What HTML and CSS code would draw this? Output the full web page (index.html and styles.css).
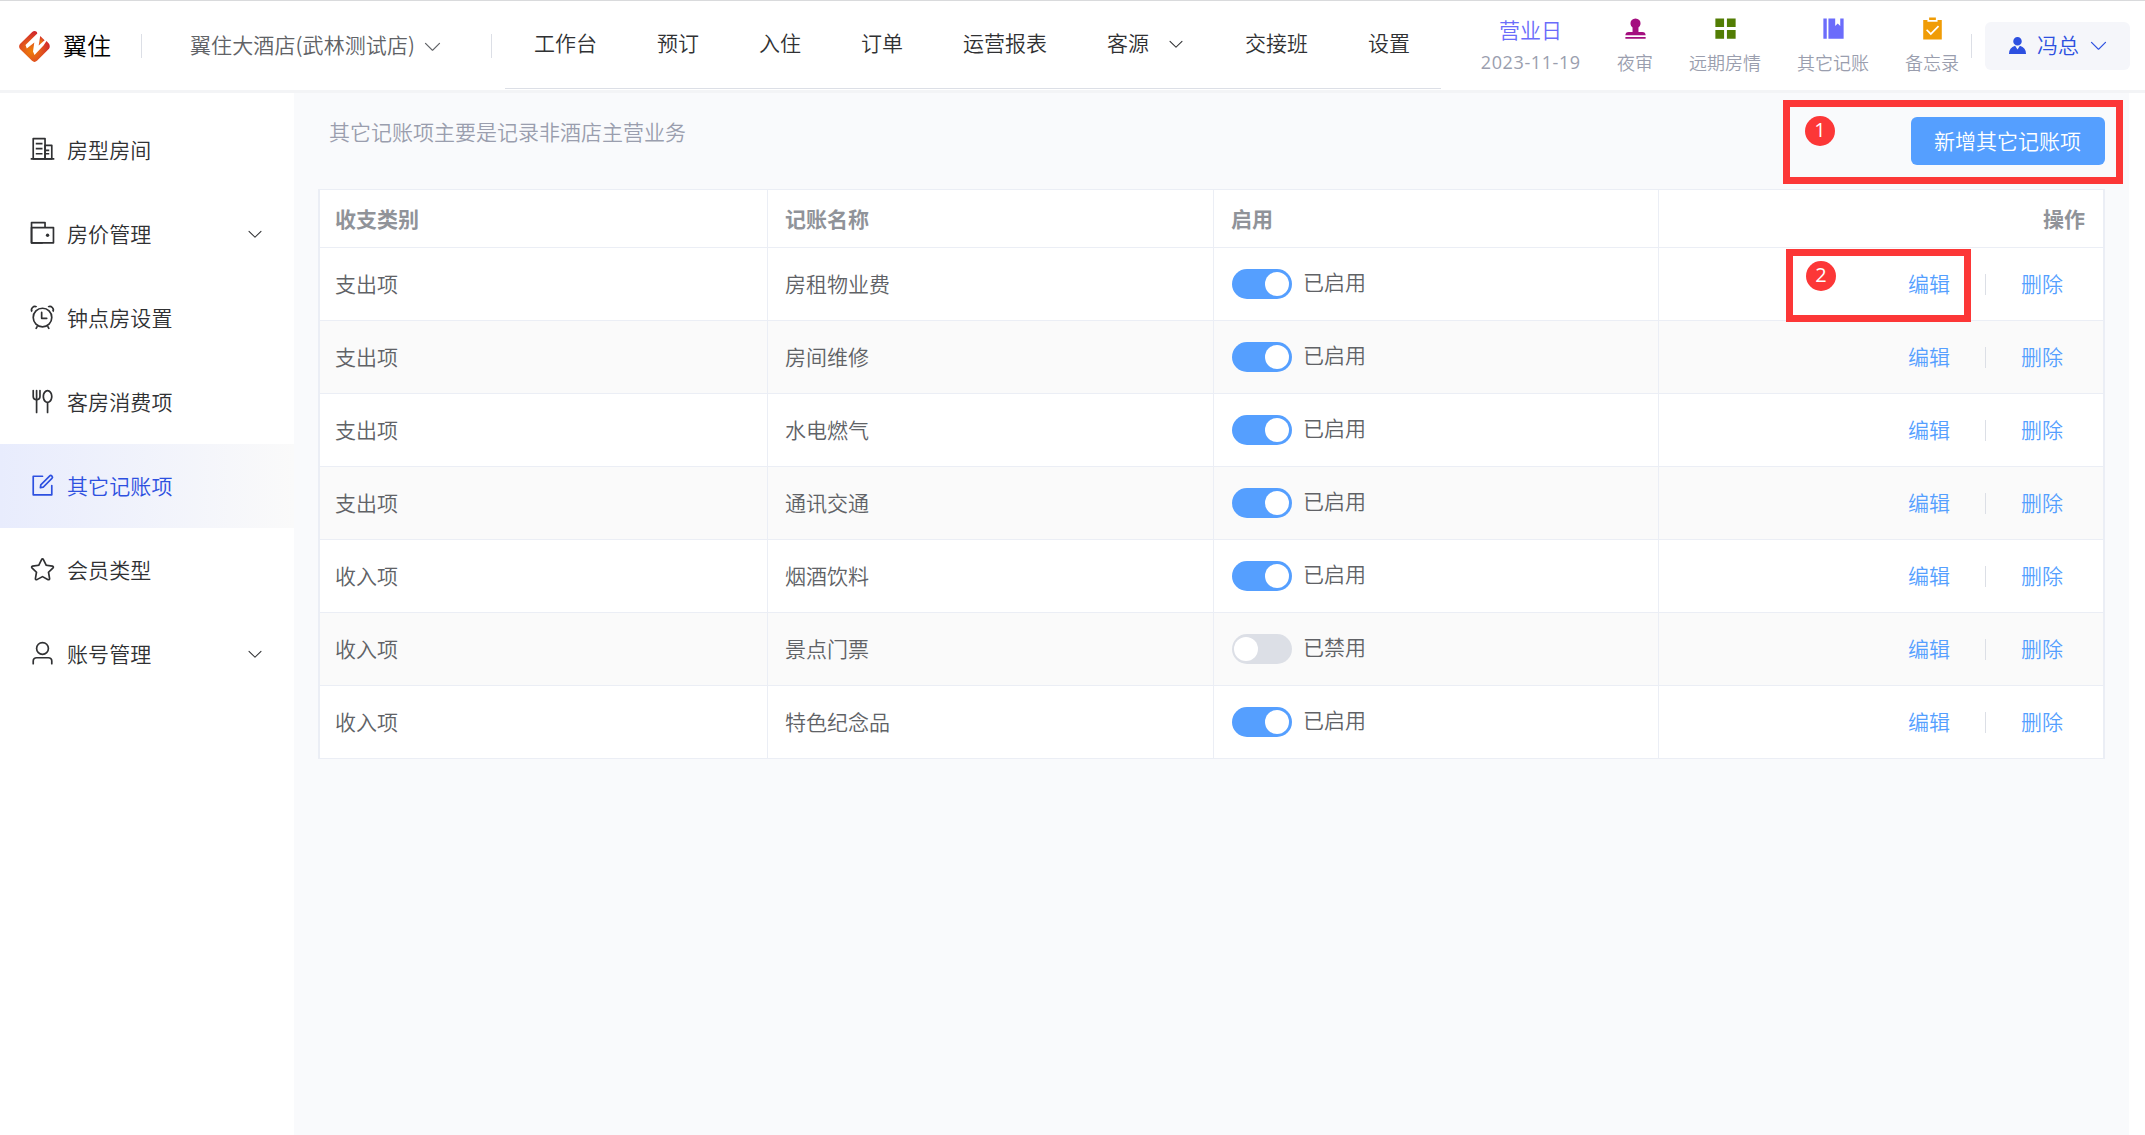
FILE: index.html
```html
<!DOCTYPE html>
<html lang="zh-CN">
<head>
<meta charset="utf-8">
<title>翼住 - 其它记账项</title>
<link rel="stylesheet" href="styles.css">
</head>
<body>
<svg class="sprite" aria-hidden="true">
  <symbol id="arrow" viewBox="0 0 1024 1024"><path d="M831.872 340.864 512 652.672 192.128 340.864a30.592 30.592 0 0 0-42.752 0 29.12 29.12 0 0 0 0 41.6L489.664 714.24a32 32 0 0 0 44.672 0l340.288-331.712a29.12 29.12 0 0 0 0-41.728 30.592 30.592 0 0 0-42.752 0z"/></symbol>
</svg>
<header class="header">
  <div class="brand">
    <svg class="logo" viewBox="0 0 31 31">
      <defs><radialGradient id="flame" cx="0.4" cy="0.65" r="0.62"><stop offset="0" stop-color="#ee7f08"/><stop offset="0.5" stop-color="#e2581c"/><stop offset="1" stop-color="#d1282c"/></radialGradient></defs>
      <path fill="url(#flame)" d="M13.2 1Q15.500-.8 17.900 1L18.300 2.500 6.500 14 7.800 17.500 15.300 11.500 14 20.500 15.500 24 24.500 14.500 27.500 10 30 12.800Q31.500 15.500 30 17.800L18 29.800Q15.500 32 13 29.800L1 18Q-.8 15.500 1 13Z"/>
      <path fill="url(#flame)" d="M21.200 5 25.600 9.300 19.700 14.500Z"/>
    </svg>
    <span class="brand-name">翼住</span>
  </div>
  <i class="rule"></i>
  <div class="hotel"><span>翼住大酒店(武林测试店)</span><svg class="chev-lg"><use href="#arrow"/></svg></div>
  <i class="rule"></i>
  <nav class="nav">
    <a>工作台</a><a>预订</a><a>入住</a><a>订单</a><a>运营报表</a>
    <a class="nav-sub">客源<svg class="chev"><use href="#arrow"/></svg></a>
    <a>交接班</a><a>设置</a>
  </nav>
  <div class="tools">
    <div class="tool biz"><b>营业日</b><span>2023-11-19</span></div>
    <div class="tool stamp"><svg viewBox="0 0 1024 1024"><path d="M624 475.968V640h144a128 128 0 0 1 128 128H128a128 128 0 0 1 128-128h144V475.968a192 192 0 1 1 224 0zM128 896v-64h768v64H128z"/></svg><span>夜审</span></div>
    <div class="tool grid"><svg viewBox="0 0 1024 1024"><path d="M128 128h330v330H128zM566 128h330v330H566zM128 566h330v330H128zM566 566h330v330H566z"/></svg><span>远期房情</span></div>
    <div class="tool book"><svg viewBox="0 0 1024 1024"><path d="M576 128v288l96-96 96 96V128h128v768H320V128h256zm-448 0h128v768H128V128z"/></svg><span>其它记账</span></div>
    <div class="tool memo"><svg viewBox="0 0 1024 1024"><path d="M704 192h160v736H160V192h160v64h384v-64zM311.616 537.280l-45.312 45.248L447.360 763.520l316.800-316.800-45.312-45.184L447.360 673.024 311.616 537.280zM384 192V96h256v96H384z"/></svg><span>备忘录</span></div>
  </div>
  <i class="rule"></i>
  <div class="user">
    <svg viewBox="0 0 1024 1024"><path d="M628.736 528.896A416 416 0 0 1 928 928H96a415.872 415.872 0 0 1 299.264-399.104L512 704l116.736-175.104zM720 304a208 208 0 1 1-416 0 208 208 0 0 1 416 0z"/></svg>
    <span>冯总</span>
    <svg><use href="#arrow"/></svg>
  </div>
</header>

<div class="layout">
  <aside class="side">
    <a class="item"><svg viewBox="0 0 1024 1024"><path d="M192 128v704h384V128H192zm-32-64h448a32 32 0 0 1 32 32v768a32 32 0 0 1-32 32H160a32 32 0 0 1-32-32V96a32 32 0 0 1 32-32z"/><path d="M256 256h256v64H256v-64zm0 192h256v64H256v-64zm0 192h256v64H256v-64zm384-128h128v64H640v-64zm0 128h128v64H640v-64zM64 832h896v64H64v-64z"/><path d="M640 384v448h192V384H640zm-32-64h256a32 32 0 0 1 32 32v512a32 32 0 0 1-32 32H608a32 32 0 0 1-32-32V352a32 32 0 0 1 32-32z"/></svg><span>房型房间</span></a>
    <a class="item"><svg viewBox="0 0 1024 1024"><path d="M640 288h-64V128H128v704h384v32a32 32 0 0 0 32 32H96a32 32 0 0 1-32-32V96a32 32 0 0 1 32-32h512a32 32 0 0 1 32 32v192z"/><path d="M128 320v512h768V320H128zm-32-64h832a32 32 0 0 1 32 32v576a32 32 0 0 1-32 32H96a32 32 0 0 1-32-32V288a32 32 0 0 1 32-32z"/><path d="M704 640a64 64 0 1 1 0-128 64 64 0 0 1 0 128z"/></svg><span>房价管理</span><svg class="chev"><use href="#arrow"/></svg></a>
    <a class="item"><svg viewBox="0 0 1024 1024"><path d="M512 832a320 320 0 1 0 0-640 320 320 0 0 0 0 640zm0 64a384 384 0 1 1 0-768 384 384 0 0 1 0 768z"/><path d="m292.288 824.576 55.424 32-48 83.136a32 32 0 1 1-55.424-32l48-83.136zm439.424 0-55.424 32 48 83.136a32 32 0 1 0 55.424-32l-48-83.136zM512 512h160a32 32 0 1 1 0 64H480a32 32 0 0 1-32-32V320a32 32 0 0 1 64 0v192zM90.496 312.256A160 160 0 0 1 312.320 90.496l-46.848 46.848a96 96 0 0 0-128 128L90.560 312.256zm835.264 0A160 160 0 0 0 704 90.496l46.848 46.848a96 96 0 0 1 128 128l46.912 46.912z"/></svg><span>钟点房设置</span></a>
    <a class="item"><svg viewBox="0 0 1024 1024"><path d="M256 410.304V96a32 32 0 0 1 64 0v314.304a96 96 0 0 0 64-90.560V96a32 32 0 0 1 64 0v223.744a160 160 0 0 1-128 156.800V928a32 32 0 1 1-64 0V476.544a160 160 0 0 1-128-156.800V96a32 32 0 0 1 64 0v223.744a96 96 0 0 0 64 90.560zM672 572.480C581.184 552.128 512 446.848 512 320c0-141.440 85.952-256 192-256s192 114.560 192 256c0 126.848-69.184 232.128-160 252.480V928a32 32 0 1 1-64 0V572.480zM704 512c66.048 0 128-82.560 128-192s-61.952-192-128-192-128 82.560-128 192 61.952 192 128 192z"/></svg><span>客房消费项</span></a>
    <a class="item active"><svg viewBox="0 0 1024 1024"><path d="M832 512a32 32 0 1 1 64 0v352a32 32 0 0 1-32 32H160a32 32 0 0 1-32-32V160a32 32 0 0 1 32-32h352a32 32 0 0 1 0 64H192v640h640V512z"/><path d="m469.952 554.240 52.800-7.552L847.104 222.400a32 32 0 1 0-45.248-45.248L477.440 501.440l-7.552 52.800zm422.400-422.400a96 96 0 0 1 0 135.808l-331.840 331.840a32 32 0 0 1-18.112 9.088L436.800 623.680a32 32 0 0 1-36.224-36.224l15.104-105.600a32 32 0 0 1 9.024-18.112l331.904-331.840a96 96 0 0 1 135.744 0z"/></svg><span>其它记账项</span></a>
    <a class="item"><svg viewBox="0 0 1024 1024"><path d="m512 747.840 228.160 119.936a6.400 6.400 0 0 0 9.280-6.720l-43.520-254.080 184.512-179.904a6.400 6.400 0 0 0-3.520-10.880l-255.104-37.120L517.760 147.904a6.400 6.400 0 0 0-11.520 0L392.192 379.072l-255.104 37.120a6.400 6.400 0 0 0-3.520 10.880L318.080 606.976l-43.584 254.080a6.400 6.400 0 0 0 9.280 6.720L512 747.840zM313.600 924.480a70.400 70.400 0 0 1-102.144-74.240l37.888-220.928L88.960 472.960A70.400 70.400 0 0 1 128 352.896l221.760-32.256 99.200-200.960a70.400 70.400 0 0 1 126.208 0l99.200 200.960 221.824 32.256a70.400 70.400 0 0 1 39.040 120.064L774.720 629.376l37.888 220.928a70.400 70.400 0 0 1-102.144 74.240L512 820.096l-198.400 104.320z"/></svg><span>会员类型</span></a>
    <a class="item"><svg viewBox="0 0 1024 1024"><path d="M512 512a192 192 0 1 0 0-384 192 192 0 0 0 0 384zm0 64a256 256 0 1 1 0-512 256 256 0 0 1 0 512zm320 320v-96a96 96 0 0 0-96-96H288a96 96 0 0 0-96 96v96a32 32 0 1 1-64 0v-96a160 160 0 0 1 160-160h448a160 160 0 0 1 160 160v96a32 32 0 1 1-64 0z"/></svg><span>账号管理</span><svg class="chev"><use href="#arrow"/></svg></a>
  </aside>
  <main class="main">
    <div class="bar">
      <p class="desc">其它记账项主要是记录非酒店主营业务</p>
      <button class="add">新增其它记账项</button>
    </div>
    <div class="table">
      <div class="row head"><div>收支类别</div><div>记账名称</div><div>启用</div><div class="ops-head">操作</div></div>
      <div class="row"><div>支出项</div><div>房租物业费</div><div><i class="switch on"></i><span class="state">已启用</span></div><div class="ops"><a>编辑</a><i></i><a>删除</a></div></div>
      <div class="row"><div>支出项</div><div>房间维修</div><div><i class="switch on"></i><span class="state">已启用</span></div><div class="ops"><a>编辑</a><i></i><a>删除</a></div></div>
      <div class="row"><div>支出项</div><div>水电燃气</div><div><i class="switch on"></i><span class="state">已启用</span></div><div class="ops"><a>编辑</a><i></i><a>删除</a></div></div>
      <div class="row"><div>支出项</div><div>通讯交通</div><div><i class="switch on"></i><span class="state">已启用</span></div><div class="ops"><a>编辑</a><i></i><a>删除</a></div></div>
      <div class="row"><div>收入项</div><div>烟酒饮料</div><div><i class="switch on"></i><span class="state">已启用</span></div><div class="ops"><a>编辑</a><i></i><a>删除</a></div></div>
      <div class="row"><div>收入项</div><div>景点门票</div><div><i class="switch"></i><span class="state">已禁用</span></div><div class="ops"><a>编辑</a><i></i><a>删除</a></div></div>
      <div class="row"><div>收入项</div><div>特色纪念品</div><div><i class="switch on"></i><span class="state">已启用</span></div><div class="ops"><a>编辑</a><i></i><a>删除</a></div></div>
    </div>
  </main>
</div>

<div class="mark mark-add"><span>1</span></div>
<div class="mark mark-edit"><span>2</span></div>
</body>
</html>
```
FILE: styles.css
```css
* { box-sizing: border-box; }
body {
  margin: 0;
  height: 1135px;
  overflow: hidden;
  position: relative;
  background: #fff;
  color: #303133;
  font: 350 21px/30px "Noto Sans CJK SC", sans-serif;
  display: flex;
  flex-direction: column;
}
svg { fill: currentColor; flex: none; display: block; }
.sprite { position: absolute; width: 0; height: 0; }
.chev { width: 18px; height: 18px; }
.chev-lg { width: 21px; height: 21px; }

.header {
  height: 93px;
  flex: none;
  display: flex;
  align-items: center;
  border-top: 1px solid #d9dadc;
  border-bottom: 3px solid #f3f4f6;
  white-space: nowrap;
}
.rule { width: 1px; height: 24px; background: #dcdfe6; flex: none; }
.brand { display: flex; align-items: center; gap: 13px; width: 141px; padding: 1px 0 0 19px; }
.logo { width: 31px; height: 31px; }
.brand-name { margin-bottom: 3px; font-size: 24px; color: #000; }
.hotel { display: flex; align-items: center; justify-content: space-between; width: 349px; padding: 0 48px 0 48px; color: #606266; }
.hotel span { margin-bottom: 3px; letter-spacing: 0.1px; }
.hotel svg { margin-top: 2px; }
.nav { display: flex; width: 936px; height: 88px; margin: 0 0 1px 13px; border-bottom: 1px solid #dcdfe6; }
.nav a { height: 83px; padding: 0 31px 0 29px; line-height: 83px; }
.nav-sub { display: flex; align-items: center; gap: 18px; }
.nav-sub svg { margin-top: 3px; }

.tools { display: flex; gap: 36px; margin-left: 39px; margin-right: 12px; font-size: 18px; color: #9a9eae; }
.tool { display: flex; flex-direction: column; align-items: center; height: 89px; padding-top: 14px; line-height: 28px; }
.tool svg { width: 27px; height: 27px; margin-bottom: 6px; }
.tool b { font-size: 21px; font-weight: 350; line-height: 30px; margin-bottom: 4px; color: #6a6cfa; }
.biz { width: 101px; padding-top: 13px; }
.biz span { font-family: "Open Sans", sans-serif; font-weight: 400; font-size: 18px; letter-spacing: 0.6px; margin-right: -0.6px; }
.stamp svg { color: #a40e7f; }
.grid svg { color: #527d04; }
.book svg { color: #6b6cfb; }
.memo svg { color: #f09c06; }
.user { display: flex; align-items: center; width: 145px; height: 48px; margin-left: 13px; padding: 0 22px; gap: 9px; background: #f5f6fa; border-radius: 6px; color: #2d50e0; }
.user svg { width: 21px; height: 21px; }
.user span { margin-bottom: 3px; }

.layout { flex: 1; display: flex; padding-right: 16px; }
.side { width: 294px; padding-top: 15px; }
.item { display: flex; align-items: center; height: 84px; padding: 0 30px 2px 29px; letter-spacing: 0.1px; }
.item > svg:first-child { width: 27px; height: 27px; margin-right: 11px; }
.item .chev { margin-left: auto; margin-top: 2px; }
.active { color: #2d50e0; background: linear-gradient(90deg, #e8ecfd, #fafafa); }

.main { flex: 1; background: #f9fafc; padding: 24px 24px 0; }
.bar { display: flex; justify-content: space-between; height: 72px; }
.desc { margin: -1px 0 0 11px; color: #9a9eae; }
.add { height: 48px; width: 194px; padding: 0 1px 3px 0; border: 0; border-radius: 6px; background: #559fff; color: #fff; font: inherit; white-space: nowrap; }
.table { background: #fff; border: 2px solid #ebeef5; border-top-width: 1px; border-bottom: 0; color: #606266; }
.row { display: grid; grid-template-columns: 448px 446px 445px 1fr; height: 73px; border-bottom: 1px solid #ebeef5; }
.row > div { display: flex; align-items: center; padding: 0 18px 2px 17px; border-right: 1px solid #ebeef5; }
.row > div:first-child { padding-left: 15px; }
.row > div:last-child { border-right: 0; justify-content: flex-end; }
.row:nth-child(odd):not(.head) { background: #fafafa; }
.head { height: 58px; color: #909399; font-weight: 700; }
.switch { width: 60px; height: 30px; margin: 2px 0 0 1px; padding: 3px 2px; border-radius: 15px; background: #dcdfe6; display: flex; }
.switch::before { content: ""; width: 24px; height: 24px; border-radius: 50%; background: #fff; }
.switch.on { background: #559fff; justify-content: flex-end; padding-right: 3px; }
.state { margin: 0 0 4px 11px; }
.row > .ops { padding-right: 40px; color: #559fff; }
.ops i { width: 1px; height: 21px; margin: 2px 35px 0; background: #dcdfe6; }

.mark { position: absolute; border: 7px solid #fc3737; }
.mark span { position: absolute; width: 30px; height: 30px; border-radius: 50%; background: #fc3737; color: #fff; text-align: center; font: 400 20px/28px "Open Sans", sans-serif; }
.mark-add { left: 1783px; top: 100px; width: 340px; height: 84px; }
.mark-add span { left: 15px; top: 9px; }
.mark-edit { left: 1786px; top: 249px; width: 185px; height: 73px; }
.mark-edit span { left: 13px; top: 5px; }
```
